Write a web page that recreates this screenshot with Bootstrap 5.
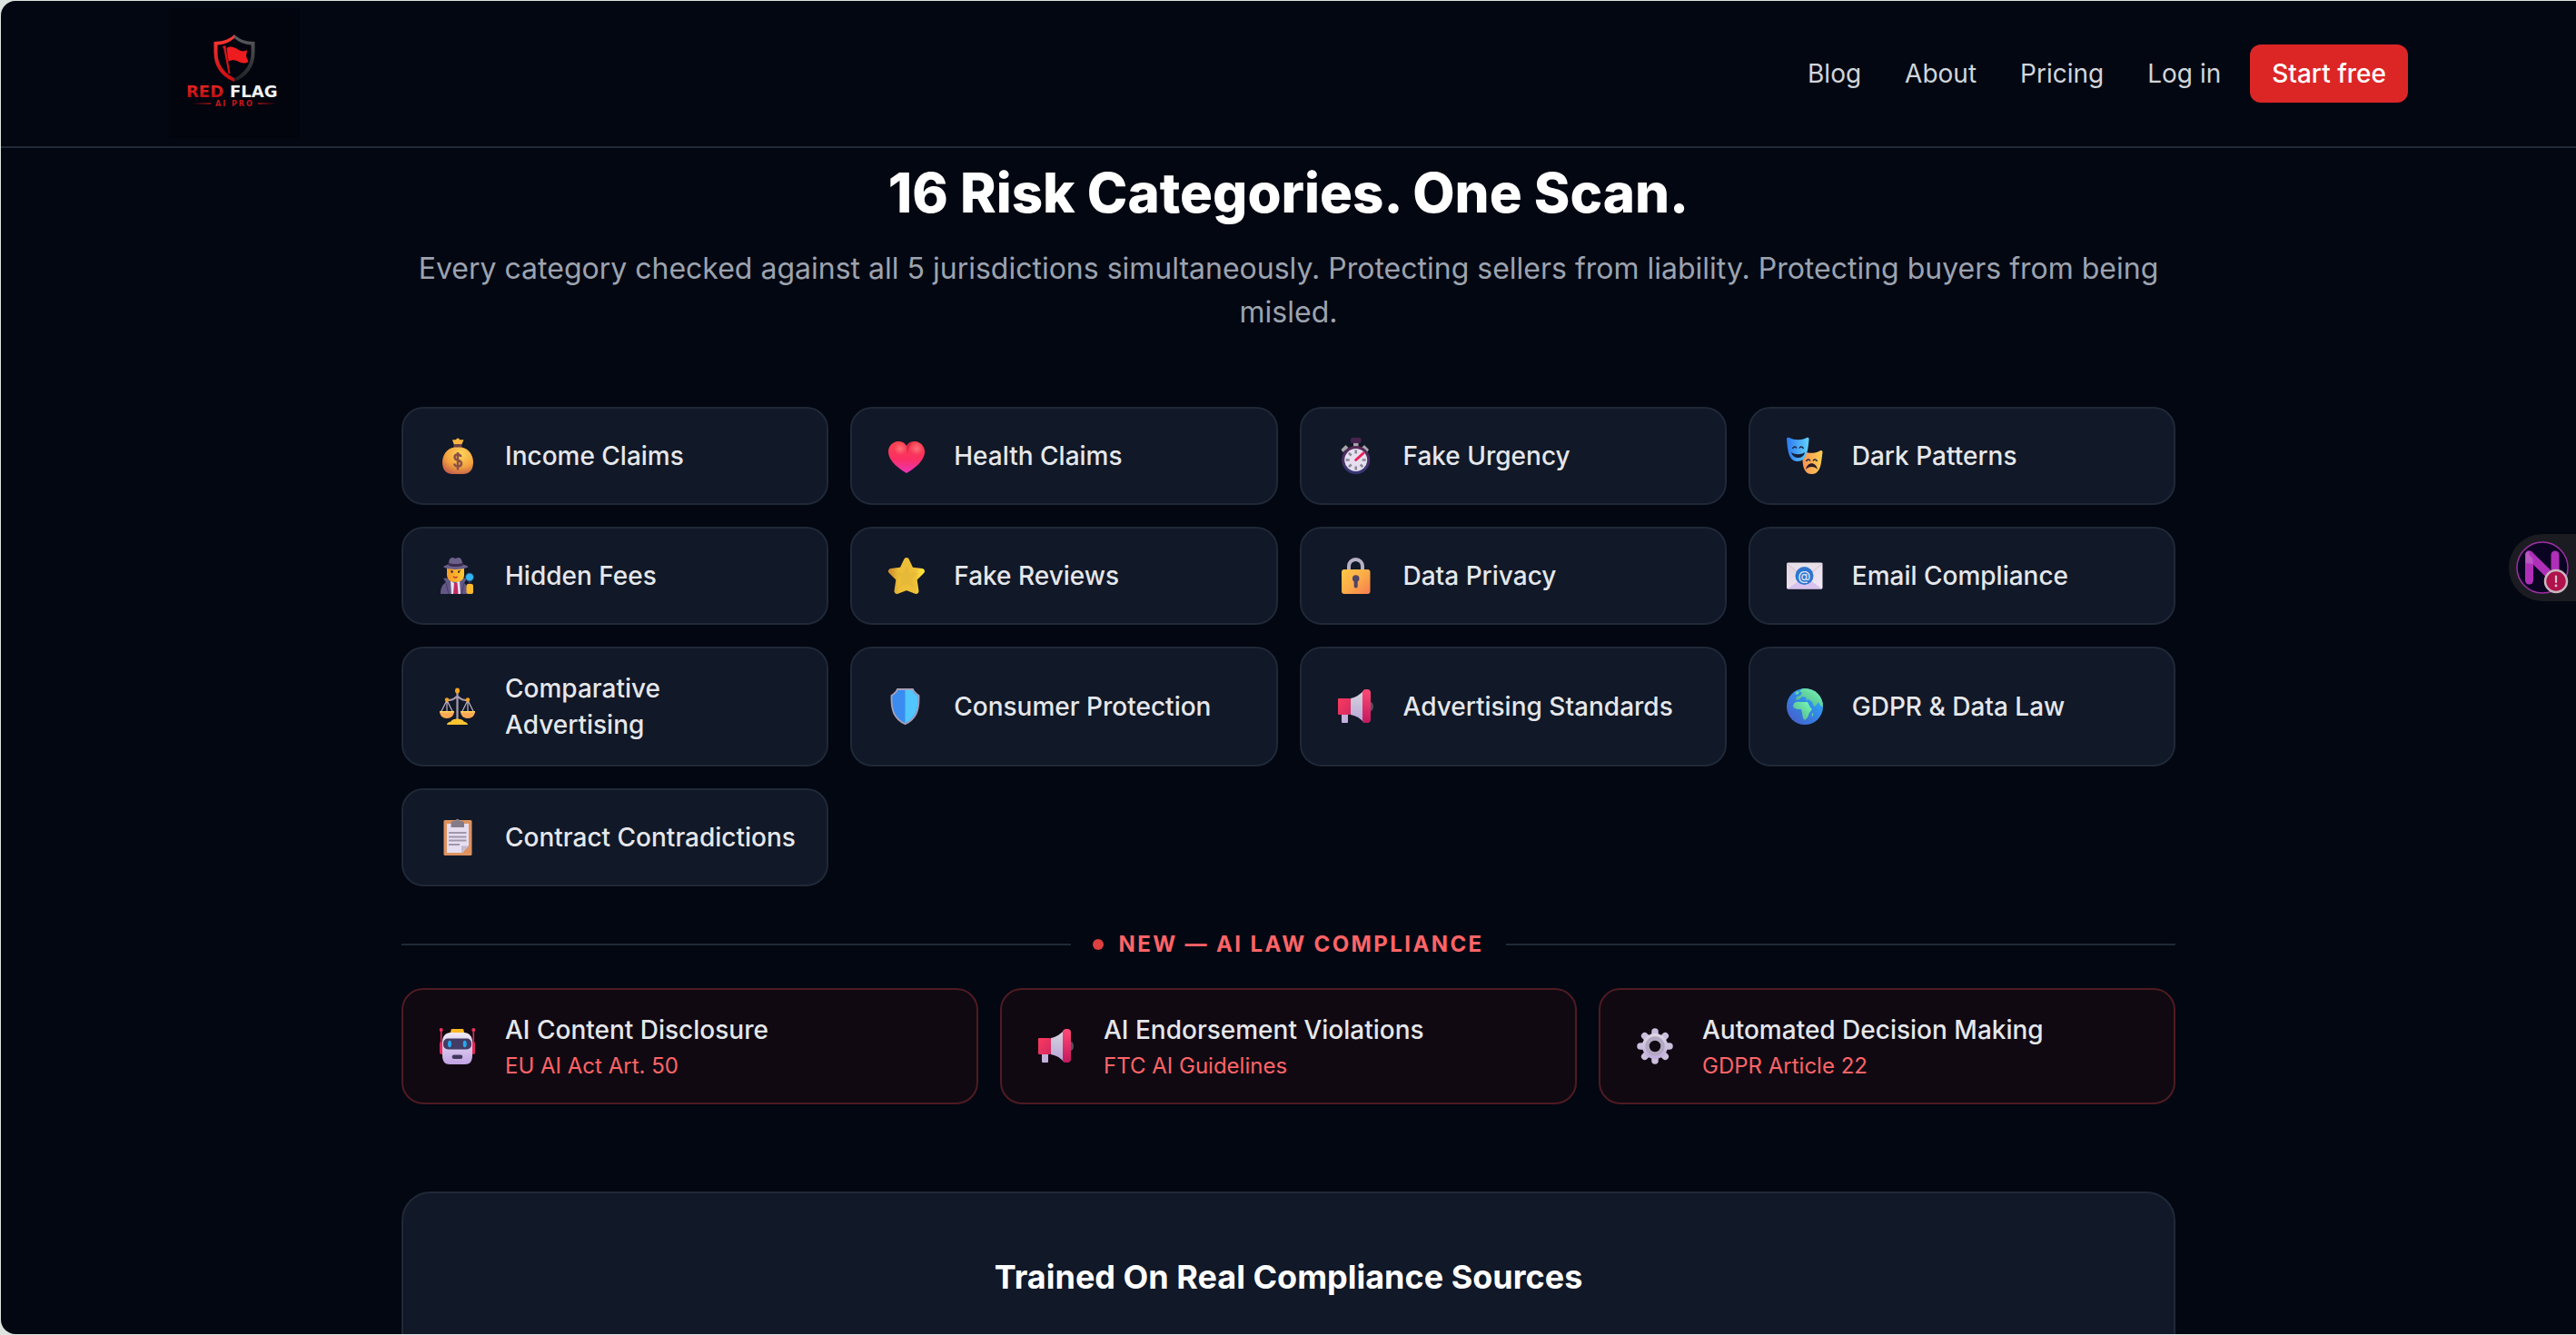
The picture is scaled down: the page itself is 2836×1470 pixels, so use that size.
<!DOCTYPE html>
<html lang="en">
<head>
<meta charset="utf-8">
<meta name="viewport" content="width=device-width, initial-scale=1">
<title>Red Flag AI Pro</title>
<link href="https://cdn.jsdelivr.net/npm/bootstrap@5.3.0/dist/css/bootstrap.min.css" rel="stylesheet">
<style>
  body { background: #dde3df; font-family: Inter, "Liberation Sans", sans-serif; font-size: 28px; line-height: 40px; color: #e5e7eb; overflow: hidden; }
  .site-frame { height: calc(100vh - 2px); margin: 1px 0 1px 1px; border-radius: 16px 0 0 16px; background: #030712; overflow: hidden; }
  .site-header { border-bottom: 2px solid #1f2937; padding: 8px 0; }
  .wide-wrap { max-width: 2561px; padding: 0 48px; }
  .page-wrap { max-width: 2049px; padding: 13px 48px 0; }
  .brand-logo { width: 144px; height: 144px; display: block; }
  .top-links { gap: 48px; }
  .top-links a { color: #d1d5db; text-decoration: none; }
  .btn-start { --bs-btn-bg: #dc2626; --bs-btn-color: #fff; --bs-btn-hover-bg: #b91c1c; --bs-btn-hover-color: #fff; --bs-btn-border-color: #dc2626; border: 0; border-radius: 12px; font-size: 28px; line-height: 40px; font-weight: 500; padding: 12px 24px; margin-left: 32px; }
  .hero-title { font-size: 60px; line-height: 72px; font-weight: 800; color: #fff; margin-bottom: 24px; }
  .hero-text { font-size: 32px; line-height: 48px; color: #9ca3af; margin-bottom: 80px; }
  .risk-card { display: flex; align-items: center; gap: 24px; height: 100%; padding: 24px 32px; border: 2px solid #1f2937; border-radius: 24px; background: #111827; font-weight: 500; }
  .risk-card svg { width: 56px; height: 56px; flex: none; padding: 8px; overflow: visible; }
  .law-card { background: #100912; border-color: #4f1b22; }
  .law-ref { font-size: 24px; line-height: 32px; font-weight: 400; color: #ff6467; margin-top: 4px; }
  .law-label { gap: 24px; margin: 48px 0 32px; font-size: 24px; line-height: 32px; font-weight: 700; letter-spacing: .1em; color: #ff6467; }
  .law-rule { flex: 1; height: 2px; background: #1f2937; }
  .law-dot { width: 12px; height: 12px; border-radius: 50%; background: #dc4040; }
  .sources-panel { margin-top: 96px; padding: 64px; border: 2px solid #1f2937; border-radius: 32px; background: #111827; min-height: 600px; }
  .sources-panel h2 { font-size: 36px; line-height: 56px; font-weight: 700; color: #fff; }
  .side-tab { position: fixed; right: 0; top: 588px; width: 74px; height: 74px; border: 0; padding: 0; border-radius: 37px 0 0 37px; background: #1b1c21; }
  .side-tab svg { display: block; }
</style>
<script src="https://cdn.jsdelivr.net/npm/bootstrap@5.3.0/dist/js/bootstrap.bundle.min.js"></script>
</head>
<body>
<svg width="0" height="0" class="position-absolute" aria-hidden="true">
  <defs>
    <linearGradient id="gHorn" x1="0" y1="0" x2="0" y2="1"><stop offset="0" stop-color="#d8d6dc"/><stop offset="1" stop-color="#b7a3d8"/></linearGradient>
    <linearGradient id="gDisc" x1="0" y1="0" x2="0" y2="1"><stop offset="0" stop-color="#ff4a75"/><stop offset="1" stop-color="#c4185f"/></linearGradient>
    <linearGradient id="gBox" x1="0" y1="0" x2="1" y2="1"><stop offset="0" stop-color="#fb3a5e"/><stop offset="1" stop-color="#d32a63"/></linearGradient>
    <symbol id="megaphone" viewBox="0 0 40 40">
      <ellipse cx="36" cy="20" rx="3" ry="5" fill="#55505e"/>
      <rect x="4" y="26" width="7" height="12" rx="1" fill="#c3b1dc"/>
      <path d="M14 11C20 10 25 6 29 2v36c-4-5-9-8-15-9z" fill="url(#gHorn)"/>
      <rect x="0" y="11" width="14" height="18" rx="1" fill="url(#gBox)"/>
      <rect x="27" y="1" width="9" height="37" rx="4" fill="url(#gDisc)"/>
    </symbol>
  </defs>
</svg>

<div class="site-frame">
  <header class="site-header">
    <nav class="wide-wrap mx-auto d-flex align-items-center justify-content-between" aria-label="Main">
      <a href="#" aria-label="Red Flag AI Pro">
        <svg class="brand-logo" viewBox="0 0 144 144">
          <defs>
            <linearGradient id="lRed" x1="0" y1="0" x2="0" y2="1"><stop offset="0" stop-color="#ff3a34"/><stop offset="1" stop-color="#c90a10"/></linearGradient>
            <linearGradient id="lGray" x1="0" y1="0" x2="0" y2="1"><stop offset="0" stop-color="#5b5d61"/><stop offset="1" stop-color="#1d1f22"/></linearGradient>
            <linearGradient id="lTxt" x1="0" y1="0" x2="0" y2="1"><stop offset="0" stop-color="#f02a26"/><stop offset="1" stop-color="#b00a0e"/></linearGradient>
          </defs>
          <rect width="144" height="144" fill="#02040e"/>
          <path d="M72 29C67 34 60 37 49.500 37V49C49.500 64 58 76 72 81V77C61 72 53.500 62 53.500 49V40.500C61 40 67 37.500 72 33z" fill="url(#lRed)"/>
          <path d="M72 29C77 34 84 37 94.500 37V49C94.500 64 86 76 72 81V77C83 72 90.500 62 90.500 49V40.500C83 40 77 37.500 72 33z" fill="url(#lGray)"/>
          <circle cx="61" cy="43" r="1.700" fill="#e01a1a"/>
          <path d="M60 43h2.500L67.500 72h-2z" fill="#d81418"/>
          <path d="M63.500 44C68 41 72 43 76 45.500C79 47.500 83 48 86 46L85 53L87.500 59C83 62 79 60 76 58.500C72 56.500 68.500 57 65.500 58.500z" fill="#ee1c1f"/>
          <g font-family="DejaVu Sans, sans-serif" font-weight="700">
            <text x="19" y="98" font-size="18" fill="url(#lTxt)">RED</text>
            <text x="67" y="98" font-size="18" fill="#f2f2f2">FLAG</text>
            <text x="51" y="108" font-size="8" letter-spacing="2" fill="#c8151a">AI PRO</text>
          </g>
          <path d="M25 105l21-.7v1.400zM119 105l-21-.7v1.400z" fill="#b01418"/>
        </svg>
      </a>
      <div class="d-flex align-items-center">
        <div class="top-links d-flex">
          <a href="#">Blog</a><a href="#">About</a><a href="#">Pricing</a><a href="#">Log in</a>
        </div>
        <button type="button" class="btn btn-start">Start free</button>
      </div>
    </nav>
  </header>

  <main class="page-wrap mx-auto">
    <h1 class="hero-title text-center">16 Risk Categories. One Scan.</h1>
    <p class="hero-text text-center">Every category checked against all 5 jurisdictions simultaneously. Protecting sellers from liability. Protecting buyers from being misled.</p>

    <div class="row row-cols-1 row-cols-md-2 row-cols-xl-4 g-4">
      <div class="col"><div class="risk-card">
        <svg viewBox="0 0 40 40"><defs><radialGradient id="mb" cx=".6" cy=".25" r=".8"><stop offset="0" stop-color="#ffd65a"/><stop offset=".6" stop-color="#f3a23f"/><stop offset="1" stop-color="#c4604a"/></radialGradient></defs>
          <path d="M14 2.500c2-1 3 .5 4-.5s2-3 4 0c1 1 3-.5 4.500.5L24 8h-8z" fill="#f9b640"/>
          <rect x="15.500" y="7" width="9" height="4.500" rx="1.500" fill="#6e4346"/>
          <path d="M16 10.500h8C32 12 37 19 37 27c0 8-4 13-11 13H14C7 40 3 35 3 27c0-8 5-15 13-16.500z" fill="url(#mb)"/>
          <path d="M23.500 21c-.5-2-2-2.500-3.500-2.500-2 0-3.500 1-3.500 3 0 4.500 7.500 2 7.500 7 0 2-2 3-4 3s-3.500-1-4-3M20 16v19.500" fill="none" stroke="#8a5048" stroke-width="2.400"/></svg>
        <span>Income Claims</span></div></div>

      <div class="col"><div class="risk-card">
        <svg viewBox="0 0 40 40"><defs><linearGradient id="ht" x1="0" y1="0" x2="0" y2="1"><stop offset="0" stop-color="#f8434f"/><stop offset=".55" stop-color="#fb2f63"/><stop offset="1" stop-color="#ea35b8"/></linearGradient><radialGradient id="hs"><stop offset="0" stop-color="#ff7078"/><stop offset="1" stop-color="#ff7078" stop-opacity="0"/></radialGradient></defs>
          <path d="M20 9C23 4 28 3.500 32 4.500c5 1.500 8 6 8 11C40 25 30 33 20 39 10 33 0 25 0 15.500c0-5 3-9.500 8-11C12 3.500 17 4 20 9z" fill="url(#ht)"/>
          <path d="M20 9c1.500-3 4.500-5 8-5-4 3-6 8-7 14z" fill="#b81c3c" opacity=".55"/>
          <ellipse cx="31" cy="12" rx="7" ry="7" fill="url(#hs)"/><ellipse cx="13" cy="12" rx="7" ry="7" fill="url(#hs)"/></svg>
        <span>Health Claims</span></div></div>

      <div class="col"><div class="risk-card">
        <svg viewBox="0 0 40 40"><defs><linearGradient id="sw" x1="0" y1="0" x2="0" y2="1"><stop offset="0" stop-color="#5a2952"/><stop offset="1" stop-color="#343878"/></linearGradient></defs>
          <path d="M4.500 13l5-5 3 3-6 5zM35 13l-5-5-3 3 6 5z" fill="#a9a5ad" transform="translate(-1 0)"/>
          <rect x="17" y="5" width="5.500" height="5" fill="#a9a5ad"/><rect x="14" y="0" width="11.500" height="6" rx="1.500" fill="#47234f"/>
          <circle cx="19.700" cy="24.500" r="15.500" fill="url(#sw)"/><circle cx="19.700" cy="24.500" r="12.500" fill="#e5dff0"/>
          <g stroke="#8c8794" stroke-width="2.600"><path d="M19.700 13.500v4M19.700 31.500v4M8.700 24.500h4M26.700 24.500h4M12 16.800l2.700 2.700M24.700 29.500l2.700 2.700M12 32.200l2.700-2.700"/></g>
          <path d="M19.700 24.500L28 17" stroke="#f01f55" stroke-width="3" stroke-linecap="round"/></svg>
        <span>Fake Urgency</span></div></div>

      <div class="col"><div class="risk-card">
        <svg viewBox="0 0 40 40"><defs><linearGradient id="mk1"><stop offset="0" stop-color="#2d78ee"/><stop offset="1" stop-color="#62d2ff"/></linearGradient><linearGradient id="mk2"><stop offset="0" stop-color="#fb9156"/><stop offset="1" stop-color="#ffd04f"/></linearGradient></defs>
          <path d="M19 15c6 3 13 2 17.500-.5 2-1 3 0 3 1.500C38 27 38 40 27.500 40 20 40 18 33 17.500 25z" fill="url(#mk2)"/>
          <path d="M0 1c0-1 1.500-1.500 3-1 6 3 13 3 19 0 1.500-.5 3 0 2.500 2C23.500 14 22 26 12 26 3 26 1 16 0 1z" fill="url(#mk1)"/>
          <path d="M5 16c4 3 11 3 15 0-1.500 8-13 8-15 0z" fill="#14203c"/>
          <path d="M6.500 12c1-2.500 3.500-2.500 4.500-.5M14 11.500c1-2 3.500-2 4.500.5M21.500 26c1-2.500 3.500-2.500 4.500-.5M29 25.500c1-2 3.500-2 4.500.5" fill="none" stroke="#202541" stroke-width="1.500"/>
          <path d="M21 35c1.500-9 11.500-9 13 0-3-4-10-4-13 0z" fill="#2a1b25"/></svg>
        <span>Dark Patterns</span></div></div>

      <div class="col"><div class="risk-card">
        <svg viewBox="0 0 40 40"><defs><linearGradient id="dt"><stop offset="0" stop-color="#f59a26"/><stop offset="1" stop-color="#ffc935"/></linearGradient></defs>
          <path d="M1 40c0-6 1.500-10 6-13l-3-4c3-1.500 5 0 9 2h9c3-2 4-3.500 8-2l-3 5c3 2 3.500 6 3.500 12z" fill="#645887"/>
          <path d="M7 28l3 12M27 28l-3 12" stroke="#463c66" stroke-width="1"/>
          <path d="M12 25l5 4 5-4 1 15H13z" fill="#e8e2f2"/><path d="M16 28h3.500l1 12h-5.500z" fill="#c42c62"/>
          <path d="M8 11h19v8c0 5-4 8-9.500 8S8 24 8 19z" fill="url(#dt)"/>
          <path d="M4 10c3-2 5-2 6-3 0-5 2-7.500 4.500-7 1.500 0 2 1 3 1s1.500-1 3-1c3-.5 4 3 5 7 1 1.500 4 1 6 3-4 4-23 4-27.500 0z" fill="#6a6089"/>
          <path d="M9.500 5.500c4 2 12 2 16.500 0v3c-5 2-12 2-16.500 0z" fill="#3b2c4e"/>
          <path d="M12 14.500l3 .8M23 14.500l-3 .8" stroke="#5c3526" stroke-width="1.200"/><circle cx="13.500" cy="16" r="1" fill="#3b2230"/><circle cx="21" cy="16" r="1" fill="#3b2230"/>
          <path d="M15 21c1.500 1 3.500 1 4.500 0" stroke="#b8312d" stroke-width="1.500" fill="none"/>
          <rect x="31.500" y="25" width="3" height="6" fill="#343048"/><rect x="29.500" y="29" width="7.500" height="11" rx="2" fill="#ffb92c"/>
          <circle cx="33" cy="21.500" r="4.500" fill="#2fb6f2" stroke="#2d3f68" stroke-width="1"/></svg>
        <span>Hidden Fees</span></div></div>

      <div class="col"><div class="risk-card">
        <svg viewBox="0 0 40 40"><defs><linearGradient id="st"><stop offset="0" stop-color="#d3942f"/><stop offset=".25" stop-color="#ecbe38"/><stop offset=".8" stop-color="#eec038"/><stop offset="1" stop-color="#ffe43c"/></linearGradient></defs>
          <path d="M20 3l5 10.500 12 1.500-8.500 8.500 2 13.500L20 33 9.500 37l2-13.500L3 15l12-1.500z" fill="url(#st)" stroke="url(#st)" stroke-width="6" stroke-linejoin="round"/>
          <path d="M20 8l3.500 8.500 8.500 1-6 6 1.500 9L20 29l-7.500 3.500 1.500-9-6-6 8.500-1z" fill="#e3b63a" opacity=".6"/></svg>
        <span>Fake Reviews</span></div></div>

      <div class="col"><div class="risk-card">
        <svg viewBox="0 0 40 40"><defs><linearGradient id="lk" x1="0" y1="0" x2="1" y2="1"><stop offset="0" stop-color="#ffc845"/><stop offset=".5" stop-color="#fbac48"/><stop offset="1" stop-color="#f77c4f"/></linearGradient></defs>
          <path d="M12 16V9.500a7.500 7.500 0 0 1 15 0V16" fill="none" stroke="#b7b0c2" stroke-width="4"/>
          <rect x="4" y="13" width="31.500" height="27" rx="3" fill="url(#lk)"/>
          <circle cx="19.700" cy="23" r="3.800" fill="#4f4568"/><rect x="17.700" y="23" width="4" height="10.500" rx="2" fill="#4f4568"/></svg>
        <span>Data Privacy</span></div></div>

      <div class="col"><div class="risk-card">
        <svg viewBox="0 0 40 40"><defs><linearGradient id="ev" x1="0" y1="0" x2="1" y2="1"><stop offset="0" stop-color="#e2d3dd"/><stop offset="1" stop-color="#f2eaf8"/></linearGradient></defs>
          <rect x="0" y="5.500" width="39.500" height="29" rx="1.500" fill="url(#ev)"/>
          <path d="M1 34.500l15-11h8l15 11z" fill="#d9c2ef"/><path d="M1 6l18.500 14L38.500 6z" fill="#e7e0e8"/><path d="M0 6.500L16 19M39.500 6.500L24 19" stroke="#c9bdcd" stroke-width=".8"/>
          <circle cx="19.500" cy="20" r="10" fill="#2f75cf"/>
          <text x="19.500" y="24.500" text-anchor="middle" font-size="14" font-family="Inter, sans-serif" font-weight="500" fill="#dfe6fa">@</text></svg>
        <span>Email Compliance</span></div></div>

      <div class="col"><div class="risk-card">
        <svg viewBox="0 0 40 40">
          <path d="M19.500 4v31M8 12.700c6 1 8-1.500 11.500-4.200 3.500 2.700 5.500 5.200 11.500 4.200" fill="none" stroke="#a99bb0" stroke-width="2.200"/>
          <path d="M8 13L1.500 26M8 13v13M8 13l6.500 13M31 13l-6.500 13M31 13v13M31 13l6.500 13" stroke="#c0b4c5" stroke-width="1.200"/>
          <path d="M0 25h16c0 5-3.500 8-8 8s-8-3-8-8zM23 25h16c0 5-3.500 8-8 8s-8-3-8-8z" fill="#fba955"/><path d="M0 25h16v1.500H0zM23 25h16v1.500H23z" fill="#ffd45b"/>
          <circle cx="8" cy="12.500" r="2.200" fill="#f3a31f"/><circle cx="31" cy="12.500" r="2.200" fill="#f3a31f"/><ellipse cx="19.500" cy="2.500" rx="2.500" ry="3" fill="#f6a51c"/>
          <path d="M8 40c0-2 2-3 4.500-3.500 1-4 13-4 14 0 2.500.5 4.500 1.500 4.500 3.500z" fill="#fdc42f"/></svg>
        <span>Comparative Advertising</span></div></div>

      <div class="col"><div class="risk-card">
        <svg viewBox="0 0 40 40">
          <path d="M10 1h17c1 3 3.500 5 6.500 7C34 24 31 33 18.500 39.300 6 33 3 24 3.500 8 6.500 6 9 4 10 1z" fill="#3b8cf0" stroke="#a5a0b8" stroke-width="1.800"/>
          <path d="M18.500 2h8c1 3 3.200 5 6 6.500C33 23 30 32 18.500 38z" fill="#52c6ff"/></svg>
        <span>Consumer Protection</span></div></div>

      <div class="col"><div class="risk-card">
        <svg viewBox="0 0 40 40"><use href="#megaphone"/></svg>
        <span>Advertising Standards</span></div></div>

      <div class="col"><div class="risk-card">
        <svg viewBox="0 0 40 40"><defs><linearGradient id="oc" x1="0" y1="1" x2="1" y2="0"><stop offset="0" stop-color="#4a58c4"/><stop offset=".5" stop-color="#3583e4"/><stop offset="1" stop-color="#28bdfb"/></linearGradient><linearGradient id="ln" x1="0" y1="1" x2="1" y2="0"><stop offset="0" stop-color="#4aa888"/><stop offset="1" stop-color="#7dffb6"/></linearGradient><clipPath id="gc"><circle cx="20" cy="20" r="20"/></clipPath></defs>
          <circle cx="20" cy="20" r="20" fill="url(#oc)"/>
          <g clip-path="url(#gc)" fill="url(#ln)">
            <path d="M17 0h20l5 12-2 8-3-1-2-4-3 4-2 1-2-5-4-3-3 1 1-3-5-1-3 3-4 1 1-4 4-1 2-3-3-2z"/>
            <path d="M7 19c1-4 4-5 8-4l8 0 3 6 2 2-3 4-2 5-3 3-2-2-1-6-1-4-4 0c-4-1-5-2-5-4z"/>
            <path d="M28 27l1.500 1-1 3-1-.5zM9 6l2-3 3 1-2 3z"/></g></svg>
        <span>GDPR &amp; Data Law</span></div></div>

      <div class="col"><div class="risk-card">
        <svg viewBox="0 0 40 40">
          <rect x="4.500" y="1" width="31" height="39" rx="1.500" fill="#dd9360"/>
          <path d="M8 5h24v24l-7 8H8z" fill="#e6def0"/><path d="M24 37v-7.500h8z" fill="#c2b7d4"/>
          <path d="M12.500 9V4c0-1 1-2 2.500-2h2.500a2.200 2.200 0 0 1 4.400 0H24c2 0 3 1 3 2v5z" fill="#857c8a"/>
          <g fill="#9f98ab"><rect x="10" y="14" width="19.500" height="2"/><rect x="10" y="18.500" width="19.500" height="2"/><rect x="10" y="22.500" width="19.500" height="2"/><rect x="10" y="27" width="12" height="2"/></g></svg>
        <span>Contract Contradictions</span></div></div>
    </div>

    <div class="law-label d-flex align-items-center">
      <span class="law-rule"></span>
      <span class="d-flex align-items-center gap-3"><span class="law-dot"></span>NEW — AI LAW COMPLIANCE</span>
      <span class="law-rule"></span>
    </div>

    <div class="row row-cols-1 row-cols-lg-3 g-4">
      <div class="col"><div class="risk-card law-card">
        <svg viewBox="0 0 40 40"><defs><linearGradient id="rb" x1="0" y1="0" x2="0" y2="1"><stop offset="0" stop-color="#efe9f4"/><stop offset="1" stop-color="#c1a3e4"/></linearGradient></defs>
          <path d="M1.700 2v24M37.300 2v24" stroke="#e02a5b" stroke-width="1.600"/><circle cx="1.700" cy="2" r="2" fill="#f0305c"/><circle cx="37.300" cy="2" r="2" fill="#f0305c"/>
          <rect x="0" y="15" width="4" height="14" rx="2" fill="#e02a5b"/><rect x="35" y="15" width="4" height="14" rx="2" fill="#e02a5b"/>
          <path d="M13 1h13l1.500 5h-16z" fill="#fdb924"/>
          <path d="M12 5h15c5 0 9 4 9 10v15c0 7-3 10-8 10H11c-5 0-8-3-8-10V15C3 9 7 5 12 5z" fill="url(#rb)"/>
          <rect x="4" y="11.500" width="31" height="12" rx="5" fill="#433c64"/>
          <ellipse cx="11" cy="17.500" rx="2" ry="3.800" fill="#26a9f0"/><ellipse cx="27.700" cy="17.500" rx="2" ry="3.800" fill="#26a9f0"/>
          <rect x="13.700" y="29.500" width="11.500" height="4.500" rx="2" fill="#43385c"/></svg>
        <div><div>AI Content Disclosure</div><div class="law-ref">EU AI Act Art. 50</div></div></div></div>

      <div class="col"><div class="risk-card law-card">
        <svg viewBox="0 0 40 40"><use href="#megaphone"/></svg>
        <div><div>AI Endorsement Violations</div><div class="law-ref">FTC AI Guidelines</div></div></div></div>

      <div class="col"><div class="risk-card law-card">
        <svg viewBox="0 0 40 40"><defs><linearGradient id="gr" x1="0" y1="0" x2="0" y2="1"><stop offset="0" stop-color="#ddd9e4"/><stop offset="1" stop-color="#c0abdc"/></linearGradient></defs>
          <g stroke="#cbbfdd" stroke-width="7.500" stroke-linecap="round"><path d="M20 4v32M4 20h32M8.700 8.700l22.600 22.600M31.300 8.700L8.700 31.300"/></g>
          <circle cx="20" cy="20" r="14" fill="url(#gr)"/><circle cx="20" cy="20" r="8.500" fill="#100912" stroke="#b3a8c2" stroke-width="4.500"/></svg>
        <div><div>Automated Decision Making</div><div class="law-ref">GDPR Article 22</div></div></div></div>
    </div>

    <section class="sources-panel text-center">
      <h2>Trained On Real Compliance Sources</h2>
    </section>
  </main>
</div>

<button type="button" class="side-tab" aria-label="Open assistant">
  <svg width="74" height="74" viewBox="0 0 74 74">
    <circle cx="37" cy="37" r="28" fill="#0a0322" stroke="#a02fa4" stroke-width="1.500"/>
    <path d="M22.500 23L51 51V23" fill="none" stroke="#b02fb8" stroke-width="9" stroke-linecap="round" stroke-linejoin="round"/>
    <path d="M22.500 23v28" stroke="#b02fb8" stroke-width="9" stroke-linecap="round"/>
    <path d="M22.500 23l4 4v6l-8-1v-9a4 4 0 0 1 4-4z" fill="#c06ac8" opacity=".7"/>
    <circle cx="52" cy="52" r="12" fill="#b0124c" stroke="#c9b9be" stroke-width="2.500"/>
    <path d="M52 46.500v6.500" stroke="#d8c4cb" stroke-width="2.200" stroke-linecap="round"/><circle cx="52" cy="57" r="1.400" fill="#d8c4cb"/>
  </svg>
</button>
</body>
</html>
